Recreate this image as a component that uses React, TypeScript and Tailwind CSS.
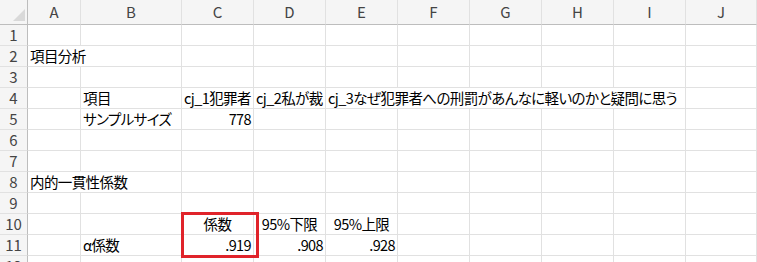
import React from "react";

type Cell = { t?: string; span?: number; align?: "l" | "r" | "c" };

const columns = ["A", "B", "C", "D", "E", "F", "G", "H", "I", "J"];

const empty = (n: number): Cell[] => Array.from({ length: n }, () => ({}));

// one entry per row; spans let long labels run across neighbouring empty cells
const rows: Cell[][] = [
  empty(10),
  [{ t: "項目分析", span: 2 }, ...empty(8)],
  empty(10),
  [
    {},
    { t: "項目" },
    { t: "cj_1犯罪者" },
    { t: "cj_2私が裁" },
    { t: "cj_3なぜ犯罪者への刑罰があんなに軽いのかと疑問に思う", span: 5 },
    {},
  ],
  [{}, { t: "サンプルサイズ" }, { t: "778", align: "r" }, ...empty(7)],
  empty(10),
  empty(10),
  [{ t: "内的一貫性係数", span: 2 }, ...empty(8)],
  empty(10),
  [{}, {}, { t: "係数", align: "c" }, { t: "95%下限", align: "c" }, { t: "95%上限", align: "c" }, ...empty(5)],
  [{}, { t: "α係数" }, { t: ".919", align: "r" }, { t: ".908", align: "r" }, { t: ".928", align: "r" }, ...empty(5)],
  empty(10),
];

const spanClass: Record<number, string> = {
  1: "col-span-1",
  2: "col-span-2",
  5: "col-span-5",
};

const alignClass = {
  l: "justify-start",
  r: "justify-end",
  c: "justify-center",
};

export default function App() {
  return (
    <div
      className="relative h-[262px] w-[757px] overflow-hidden bg-white text-black [font-feature-settings:'palt']"
      style={{ fontFamily: '"Noto Sans CJK JP", "Noto Sans", sans-serif' }}
    >
      <div className="grid grid-cols-[28px_53px_101px_72px_72px_72px_72px_72px_72px_72px_71px] grid-rows-[25px_repeat(12,21px)]">
        {/* corner */}
        <div className="relative border-b border-r border-[#bdbdbd] bg-[#f5f5f5]">
          <svg className="absolute left-0 top-0" width="28" height="25" viewBox="0 0 28 25">
            <polygon points="25,9 25,21 13,21" fill="#d9d9d9" />
          </svg>
        </div>
        {columns.map((c) => (
          <div
            key={c}
            className="flex items-center justify-center border-b border-r border-b-[#bdbdbd] border-r-[#e1e1e1] bg-[#f5f5f5] pt-[1px] text-[15px] text-[#444]"
          >
            {c}
          </div>
        ))}

        {rows.map((row, r) => (
          <React.Fragment key={r}>
            <div className="flex items-center justify-center border-b border-r border-b-[#e1e1e1] border-r-[#bdbdbd] bg-[#f5f5f5] text-[15px] text-[#444]">
              {r + 1}
            </div>
            {row.map((cell, i) => (
              <div
                key={i}
                className={`flex items-end overflow-hidden whitespace-nowrap border-b border-r border-[#e1e1e1] px-[2px] pb-[1px] text-[14.5px] leading-[18px] tracking-[-0.6px] ${
                  spanClass[cell.span ?? 1]
                } ${alignClass[cell.align ?? "l"]}`}
              >
                {cell.t}
              </div>
            ))}
          </React.Fragment>
        ))}
      </div>

      {/* highlight around the coefficient cells */}
      <div className="pointer-events-none absolute left-[181px] top-[212px] h-[46px] w-[78px] border-[3px] border-[#e0232a]" />
    </div>
  );
}
